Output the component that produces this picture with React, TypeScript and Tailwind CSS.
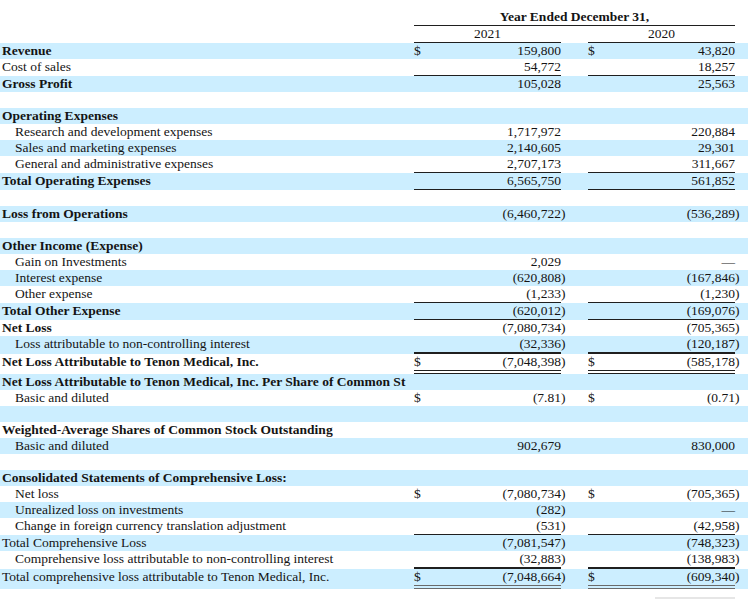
import React from "react";

type Line = "single" | "thick" | "double" | "doubleGray";

type Row = {
  label?: string;
  bold?: boolean;
  indent?: boolean;
  a?: string;
  b?: string;
  dollar?: boolean;
  line?: Line;
};

const rows: Row[] = [
  { label: "Revenue", bold: true, a: "159,800", b: "43,820", dollar: true },
  { label: "Cost of sales", a: "54,772", b: "18,257", line: "single" },
  { label: "Gross Profit", bold: true, a: "105,028", b: "25,563" },
  {},
  { label: "Operating Expenses", bold: true },
  { label: "Research and development expenses", indent: true, a: "1,717,972", b: "220,884" },
  { label: "Sales and marketing expenses", indent: true, a: "2,140,605", b: "29,301" },
  { label: "General and administrative expenses", indent: true, a: "2,707,173", b: "311,667", line: "single" },
  { label: "Total Operating Expenses", bold: true, a: "6,565,750", b: "561,852", line: "single" },
  {},
  { label: "Loss from Operations", bold: true, a: "(6,460,722)", b: "(536,289)" },
  {},
  { label: "Other Income (Expense)", bold: true },
  { label: "Gain on Investments", indent: true, a: "2,029", b: "—" },
  { label: "Interest expense", indent: true, a: "(620,808)", b: "(167,846)" },
  { label: "Other expense", indent: true, a: "(1,233)", b: "(1,230)", line: "single" },
  { label: "Total Other Expense", bold: true, a: "(620,012)", b: "(169,076)", line: "single" },
  { label: "Net Loss", bold: true, a: "(7,080,734)", b: "(705,365)" },
  { label: "Loss attributable to non-controlling interest", indent: true, a: "(32,336)", b: "(120,187)", line: "thick" },
  { label: "Net Loss Attributable to Tenon Medical, Inc.", bold: true, a: "(7,048,398)", b: "(585,178)", dollar: true, line: "double" },
  // the statement cuts this label off at the column edge
  { label: "Net Loss Attributable to Tenon Medical, Inc. Per Share of Common St", bold: true },
  { label: "Basic and diluted", indent: true, a: "(7.81)", b: "(0.71)", dollar: true },
  {},
  { label: "Weighted-Average Shares of Common Stock Outstanding", bold: true },
  { label: "Basic and diluted", indent: true, a: "902,679", b: "830,000" },
  {},
  { label: "Consolidated Statements of Comprehensive Loss:", bold: true },
  { label: "Net loss", indent: true, a: "(7,080,734)", b: "(705,365)", dollar: true },
  { label: "Unrealized loss on investments", indent: true, a: "(282)", b: "—" },
  { label: "Change in foreign currency translation adjustment", indent: true, a: "(531)", b: "(42,958)", line: "single" },
  { label: "Total Comprehensive Loss", a: "(7,081,547)", b: "(748,323)" },
  { label: "Comprehensive loss attributable to non-controlling interest", indent: true, a: "(32,883)", b: "(138,983)", line: "thick" },
  { label: "Total comprehensive loss attributable to Tenon Medical, Inc.", a: "(7,048,664)", b: "(609,340)", dollar: true, line: "doubleGray" },
];

const lineClass: Record<Line, string> = {
  single: "border-b border-[#1f1f1f]",
  thick: "border-b-2 border-[#1f1f1f]",
  double: "border-b-[4px] border-double border-[#1f1f1f]",
  doubleGray: "border-b-[4px] border-double border-[#6a6a6a]",
};

function split(v?: string) {
  if (!v) return { num: "", close: "" };
  if (v.startsWith("(")) return { num: v.slice(0, -1), close: ")" };
  return { num: v, close: "" };
}

function Amount({ value, dollar, line, wide }: { value?: string; dollar?: boolean; line?: Line; wide: boolean }) {
  const { num, close } = split(value);
  return (
    <>
      <div className={`w-[147px] h-[16px] box-content flex justify-between items-center ${line ? lineClass[line] : ""}`}>
        <span>{dollar ? "$" : ""}</span>
        <span>{num}</span>
      </div>
      <div className={`${wide ? "w-[27px]" : "w-[13px]"} h-[16px] flex items-center`}>{close}</div>
    </>
  );
}

export default function App() {
  return (
    <div
      className="w-[750px] h-[600px] overflow-hidden bg-white text-[#141414] text-[13.5px] leading-[16px] pt-[9px]"
      style={{ fontFamily: '"Liberation Serif", "Times New Roman", serif' }}
    >
      {/* header */}
      <div className="flex">
        <div className="w-[414px]" />
        <div className="w-[321px] h-[16px] box-content border-b border-[#1f1f1f] font-bold text-center">
          Year Ended December 31,
        </div>
      </div>
      <div className="flex">
        <div className="w-[414px]" />
        <div className="w-[147px] h-[16px] box-content border-b border-[#1f1f1f] text-center">2021</div>
        <div className="w-[27px]" />
        <div className="w-[147px] h-[16px] box-content border-b border-[#1f1f1f] text-center">2020</div>
      </div>

      {rows.map((r, i) => (
        <div key={i} className={`flex w-[748px] whitespace-nowrap ${i % 2 === 0 ? "bg-[#cceeff]" : ""}`}>
          <div className="w-[414px] h-[16px] flex items-center">
            <div className={`${r.bold ? "font-bold" : ""} ${r.indent ? "pl-[15px]" : "pl-[2px]"}`}>{r.label}</div>
          </div>
          <Amount value={r.a} dollar={r.dollar} line={r.line} wide />
          <Amount value={r.b} dollar={r.dollar} line={r.line} wide={false} />
        </div>
      ))}

      <div className="mt-[8px] ml-[655px] w-[80px] h-[2px] bg-[#e6e6e6]" />
    </div>
  );
}
